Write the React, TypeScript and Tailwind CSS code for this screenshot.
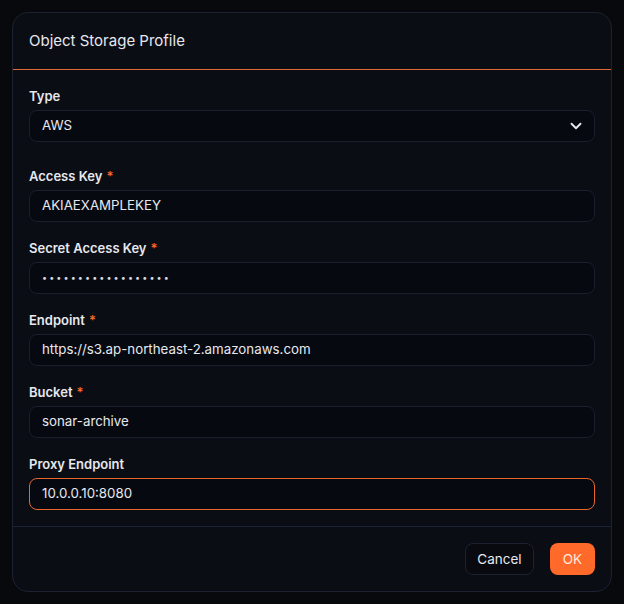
import React from "react";
import { ChevronDown } from "lucide-react";

function Label({ text, required }: { text: string; required?: boolean }) {
  return (
    <div className="flex h-5 items-center text-[13px] font-semibold leading-5 text-[#e6e8ee]">
      <span>{text}</span>
      {required && <span className="ml-1 text-[#f26b2a]">*</span>}
    </div>
  );
}

function Field({
  label,
  value,
  required,
  focused,
  password,
}: {
  label: string;
  value: string;
  required?: boolean;
  focused?: boolean;
  password?: boolean;
}) {
  return (
    <div className="flex flex-col gap-1">
      <Label text={label} required={required} />
      <div
        className={
          focused
            ? "flex h-8 items-center rounded-lg border border-[#e8662e] bg-[#070910] px-3 text-[13.3px] text-[#e6e8ee]"
            : "flex h-8 items-center rounded-lg border border-[#1a1f2e] bg-[#070910] px-3 text-[13.3px] text-[#e6e8ee]"
        }
      >
        {password ? (
          <span className="text-[9px] tracking-[2.1px] text-[#d8dbe2]">{value}</span>
        ) : (
          <span>{value}</span>
        )}
      </div>
    </div>
  );
}

export default function App() {
  return (
    <div className="min-h-[604px] bg-[#07090d] p-3 font-['Inter',sans-serif]">
      <div className="w-[600px] rounded-2xl border border-[#1d2130] bg-[#0b0d14]">
        <div className="border-b border-[#e0673a] px-4 py-4">
          <div className="text-[15px] leading-6 text-[#e6e8ee]">Object Storage Profile</div>
        </div>
        <div className="flex flex-col gap-4 px-4 py-4">
          <div className="mb-2 flex flex-col gap-1">
            <Label text="Type" />
            <div className="flex h-8 items-center justify-between rounded-lg border border-[#1a1f2e] bg-[#070910] pl-3 pr-2 text-[13.3px] text-[#e6e8ee]">
              <span>AWS</span>
              <ChevronDown size={18} strokeWidth={2.5} className="mr-[1px] text-[#e6e8ee]" />
            </div>
          </div>
          <Field label="Access Key" required value="AKIAEXAMPLEKEY" />
          <Field label="Secret Access Key" required password value="••••••••••••••••••" />
          <Field label="Endpoint" required value="https://s3.ap-northeast-2.amazonaws.com" />
          <Field label="Bucket" required value="sonar-archive" />
          <Field label="Proxy Endpoint" focused value="10.0.0.10:8080" />
        </div>
        <div className="flex justify-end gap-4 border-t border-[#1b2338] px-4 py-4">
          <button className="h-8 w-[69px] rounded-lg border border-[#1d2230] bg-[#080a10] text-[13.5px] text-[#e6e8ee]">
            Cancel
          </button>
          <button className="h-8 w-[45px] rounded-lg bg-[#ff6a2b] text-[13.5px] text-[#fde8dc]">OK</button>
        </div>
      </div>
    </div>
  );
}
